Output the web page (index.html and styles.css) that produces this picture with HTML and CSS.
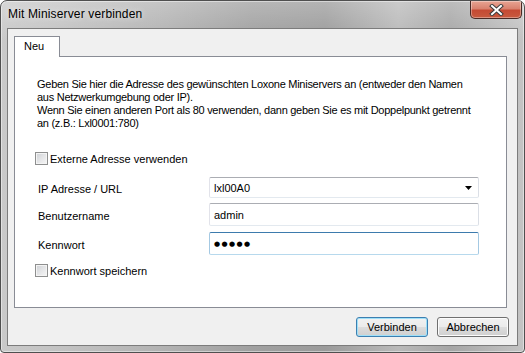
FILE: index.html
```
<!DOCTYPE html>
<html lang="de">
<head>
    <meta charset="UTF-8">
    <title>Mit Miniserver verbinden</title>
    <link rel="stylesheet" href="styles.css">
</head>
<body>
    <div class="window">
        <div class="titlebar">
            <span class="title">Mit Miniserver verbinden</span>
            <button class="close-btn" title="Schließen">
                <svg width="15" height="12" viewBox="0 0 15 12">
                    <path d="M3 2 L12 10 M12 2 L3 10" stroke="#3b3b3b" stroke-width="4" stroke-linecap="square"/>
                    <path d="M3 2 L12 10 M12 2 L3 10" stroke="#fff" stroke-width="2" stroke-linecap="square"/>
                </svg>
            </button>
        </div>

        <div class="client">
            <!-- Registerkarten -->
            <div class="tabs">
                <div class="tab-strip">
                    <div class="tab active">Neu</div>
                </div>
                <div class="tab-panel">
                    <p class="intro">Geben Sie hier die Adresse des gewünschten Loxone Miniservers an (entweder den Namen<br>aus Netzwerkumgebung oder IP).<br>Wenn Sie einen anderen Port als 80 verwenden, dann geben Sie es mit Doppelpunkt getrennt<br>an (z.B.: Lxl0001:780)</p>

                    <label class="check check-external"><span class="box"></span>Externe Adresse verwenden</label>

                    <div class="fields">
                        <div class="field field-url">
                            <span class="field-label">IP Adresse / URL</span>
                            <div class="input combo">lxl00A0
                                <svg class="arrow" width="7" height="4" viewBox="0 0 7 4"><polygon points="0,0 7,0 3.5,4" fill="#000"/></svg>
                            </div>
                        </div>
                        <div class="field field-user">
                            <span class="field-label">Benutzername</span>
                            <div class="input text">admin</div>
                        </div>
                        <div class="field field-pass">
                            <span class="field-label">Kennwort</span>
                            <div class="input text focused"><span class="dots">●●●●●</span></div>
                        </div>
                    </div>

                    <label class="check check-save"><span class="box"></span>Kennwort speichern</label>
                </div>
            </div>

            <!-- Schaltflächen -->
            <div class="actions">
                <button class="btn btn-default">Verbinden</button>
                <button class="btn">Abbrechen</button>
            </div>
        </div>
    </div>
</body>
</html>
```

FILE: styles.css
```
* {
    box-sizing: border-box;
}

body {
    margin: 0;
    font-family: "Liberation Sans", Arial, sans-serif;
    font-size: 11px;
    color: #000;
    background: #fff;
}

.window {
    width: 525px;
    height: 353px;
    border: 1px solid #4f4f4f;
    border-radius: 7px 7px 4px 4px;
    padding: 0 6px 6px;
    display: flex;
    flex-direction: column;
    overflow: hidden;
    background:
        linear-gradient(180deg, rgba(255,255,255,0.25) 0%, rgba(255,255,255,0) 40px),
        linear-gradient(90deg, #c9c9c9 0%, #c2c2c2 12%, #b3b3b3 30%, #a0a0a0 48%, #9b9b9b 62%, #b9b9b9 76%, #a6a6a6 86%, #c4c4c4 100%);
    box-shadow: inset 0 0 0 1px rgba(255,255,255,0.45);
}

.titlebar {
    height: 27px;
    margin: 0 -6px;
    padding-left: 7px;
    display: flex;
    align-items: flex-start;
}

.title {
    font-size: 12px;
    line-height: 15px;
    padding-top: 6px;
    letter-spacing: 0.15px;
    color: #000;
    text-shadow: 0 0 6px rgba(255,255,255,0.8);
}

.close-btn {
    margin-left: auto;
    margin-right: 2px;
    width: 52px;
    height: 18px;
    padding: 0;
    border: 1px solid #4a2a25;
    border-top: none;
    border-radius: 0 0 5px 5px;
    background: linear-gradient(180deg, #e8a493 0%, #d9826f 45%, #c54a33 55%, #c85a3f 100%);
    box-shadow: inset 0 0 0 1px rgba(255,255,255,0.35);
    display: flex;
    align-items: center;
    justify-content: center;
}

.client {
    flex: 1;
    border: 1px solid #7c7c7c;
    background: #f0f0f0;
    display: flex;
    flex-direction: column;
    padding: 7px 0 8px 6px;
}

.tabs {
    margin-right: 10px;
}

.tab-strip {
    height: 20px;
}

.tab {
    position: relative;
    z-index: 1;
    width: 46px;
    height: 21px;
    border: 1px solid #898c95;
    border-bottom: none;
    background: #fff;
    padding-left: 9px;
    line-height: 19px;
}

.tab-panel {
    height: 252px;
    border: 1px solid #898c95;
    background: #fff;
    padding: 21px 0 0 20px;
}

.intro {
    margin: 0 0 0 2px;
    line-height: 13px;
    letter-spacing: -0.27px;
    white-space: nowrap;
}

.check {
    display: flex;
    align-items: center;
    height: 13px;
}

.check-external {
    margin-top: 22px;
}

.check-save {
    margin-top: 9px;
}

.box {
    width: 13px;
    height: 13px;
    margin-right: 2px;
    border: 1px solid #8e8f8f;
    background: linear-gradient(135deg, #cdd0d4 0%, #e4e5e7 50%, #f6f6f6 100%);
    box-shadow: inset 0 0 0 1px #f4f4f4;
}

.fields {
    margin: 12px 0 0 3px;
}

.field {
    display: flex;
    align-items: center;
}

.field-label {
    width: 171px;
    padding-top: 2px;
}

.field-url .input {
    height: 21px;
}

.field-user {
    margin-top: 5px;
}

.field-pass {
    margin-top: 6px;
}

.input {
    width: 270px;
    height: 23px;
    border: 1px solid;
    border-color: #abadb3 #dbdfe6 #e3e9ef #e2e3ea;
    border-radius: 2px;
    padding-left: 4px;
    display: flex;
    align-items: center;
    background: #fff;
}

.input.focused {
    border-color: #3d7bad #a4c9e3 #b7d9ed #a4c9e3;
}

.combo .arrow {
    margin-left: auto;
    margin-right: 6px;
}

.dots {
    font-family: "DejaVu Sans", sans-serif;
    font-size: 7px;
    letter-spacing: 1.4px;
}

.actions {
    display: flex;
    justify-content: flex-end;
    gap: 9px;
    margin: 9px 8px 0 0;
}

.btn {
    width: 72px;
    height: 20px;
    padding: 0;
    border: 1px solid #707070;
    border-radius: 3px;
    font-family: inherit;
    font-size: 11px;
    color: #000;
    background: linear-gradient(180deg, #f2f2f2 0%, #ebebeb 50%, #dddddd 51%, #cfcfcf 100%);
    box-shadow: inset 0 0 0 1px #fcfcfc;
}

.btn-default {
    border-color: #3c7fb1;
    box-shadow: inset 0 0 0 1px #9fe0f8;
}
```
